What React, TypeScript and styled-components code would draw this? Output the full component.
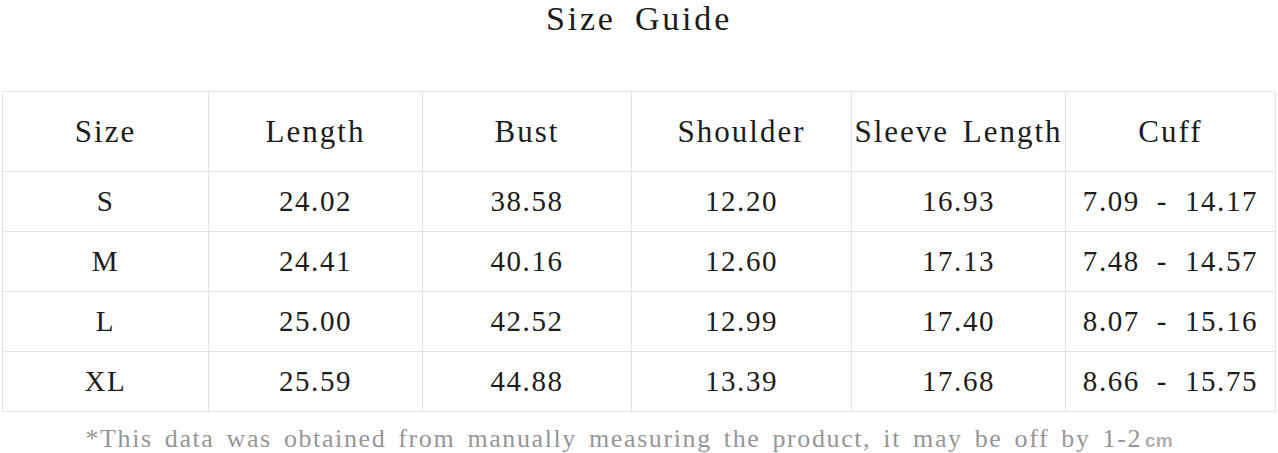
import React from "react";
import styled, { createGlobalStyle } from "styled-components";

const GlobalStyle = createGlobalStyle`
  html, body {
    margin: 0;
    padding: 0;
    background: #ffffff;
  }
  body {
    font-family: "Liberation Serif", "Times New Roman", serif;
    color: #1c1c1c;
  }
`;

const Page = styled.div`
  width: 1278px;
  height: 453px;
  overflow: hidden;
  background: #fff;
`;

const Title = styled.h1`
  margin: 0;
  height: 91px;
  text-align: center;
  font-size: 34px;
  font-weight: normal;
  line-height: 38px;
  letter-spacing: 2.8px;
  word-spacing: 8px;
  color: #1a1a1a;
`;

const Grid = styled.div`
  display: grid;
  grid-template-columns: 206px 214px 209px 220px 214px 210px;
  grid-template-rows: 80px repeat(4, 60px);
  margin-left: 2px;
  width: 1273px;
  box-sizing: border-box;
  border-top: 1px solid #e4e4e4;
  border-left: 1px solid #e4e4e4;
`;

const Cell = styled.div<{ $head?: boolean }>`
  display: flex;
  align-items: center;
  justify-content: center;
  box-sizing: border-box;
  border-right: 1px solid #e4e4e4;
  border-bottom: 1px solid #e4e4e4;
  font-size: ${(p) => (p.$head ? "31px" : "29px")};
  letter-spacing: ${(p) => (p.$head ? "2px" : "1.6px")};
  word-spacing: ${(p) => (p.$head ? "4px" : "8px")};
  color: #1c1c1c;
  white-space: pre;
`;

const Note = styled.p`
  margin: 0;
  padding-top: 14px;
  padding-right: 20px;
  text-align: center;
  font-size: 26px;
  line-height: 26px;
  letter-spacing: 1.6px;
  word-spacing: 4px;
  color: #969696;
  white-space: nowrap;
`;

const Unit = styled.span`
  font-family: "Liberation Sans", Arial, sans-serif;
  font-weight: bold;
  font-size: 19px;
  letter-spacing: 0;
  color: #b0b0b0;
  margin-left: 3px;
`;

const headers = ["Size", "Length", "Bust", "Shoulder", "Sleeve Length", "Cuff"];

const rows = [
  ["S", "24.02", "38.58", "12.20", "16.93", "7.09 - 14.17"],
  ["M", "24.41", "40.16", "12.60", "17.13", "7.48 - 14.57"],
  ["L", "25.00", "42.52", "12.99", "17.40", "8.07 - 15.16"],
  ["XL", "25.59", "44.88", "13.39", "17.68", "8.66 - 15.75"],
];

const App: React.FC = () => (
  <Page>
    <GlobalStyle />
    <Title>Size Guide</Title>
    <Grid>
      {headers.map((h) => (
        <Cell key={h} $head>
          {h}
        </Cell>
      ))}
      {rows.map((r) =>
        r.map((v, i) => <Cell key={r[0] + i}>{v}</Cell>)
      )}
    </Grid>
    <Note>
      *This data was obtained from manually measuring the product, it may be off by 1-2
      <Unit>cm</Unit>
    </Note>
  </Page>
);

export default App;
